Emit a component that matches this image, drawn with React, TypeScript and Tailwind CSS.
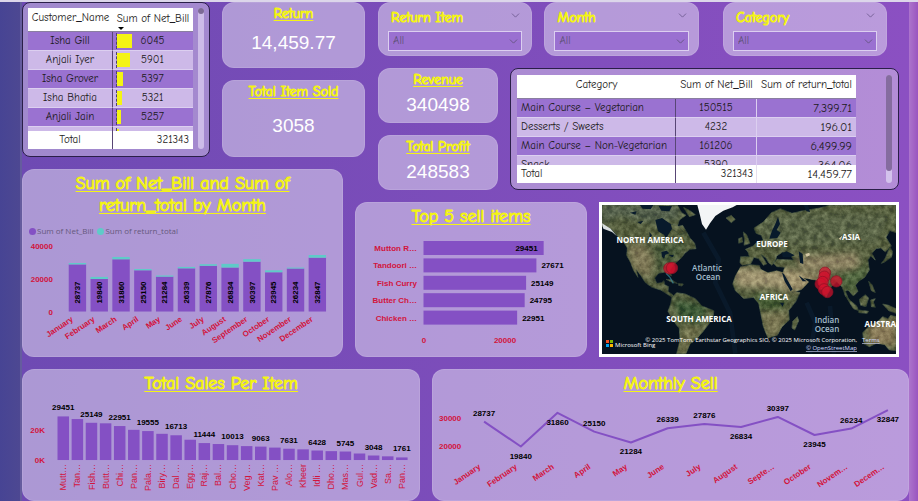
import React from "react";
import { ChevronDown } from "lucide-react";

const comic = "font-['Comic_Sans_MS','Comic_Neue','Open_Sans',sans-serif]";
const heading = "text-[#f4f414] [-webkit-text-stroke:1px_#f4f414] [text-decoration-skip-ink:none]";
const card = "rounded-xl border border-white/10 bg-[#eae6f6]/50";

const MONTHS = ["January", "February", "March", "April", "May", "June", "July", "August", "September", "October", "November", "December"];
const NET_BILL = [28737, 19840, 31860, 25150, 21284, 26339, 27876, 26834, 30397, 23945, 26234, 32847];
const RETURNS = [700, 1300, 1500, 600, 500, 700, 900, 2700, 1700, 1200, 300, 1800];

const ITEMS: [string, number][] = [
  ["Mutt…", 29451], ["Tan…", 27671], ["Fish…", 25149], ["Butt…", 24795], ["Chi…", 22951],
  ["Pan…", 20400], ["Pala…", 19555], ["Biry…", 17700], ["Dal …", 16713], ["Egg…", 13700],
  ["Raj…", 11444], ["Bal…", 10800], ["Cho…", 10013], ["Veg …", 9400], ["Kat…", 9063],
  ["Pav …", 8400], ["Alo…", 7631], ["Kheer", 7200], ["Idli …", 6428], ["Dho…", 6000],
  ["Mas…", 5745], ["Gul…", 4400], ["Vad…", 3048], ["Sa…", 2500], ["Pan…", 1761],
];

const TOP_ITEMS: [string, number][] = [
  ["Mutton R…", 29451], ["Tandoori …", 27671], ["Fish Curry", 25149], ["Butter Ch…", 24795], ["Chicken …", 22951],
];

const CUSTOMERS: [string, number, string][] = [
  ["Isha Gill", 6045, "w-[15px]"],
  ["Anjali Iyer", 5901, "w-[13px]"],
  ["Isha Grover", 5397, "w-[6px]"],
  ["Isha Bhatia", 5321, "w-[5px]"],
  ["Anjali Jain", 5257, "w-[4px]"],
  ["Neha Pandey", 5188, "w-[2px]"],
];

const CATEGORIES = [
  ["Main Course – Vegetarian", "150515", "7,399.71"],
  ["Desserts / Sweets", "4232", "196.01"],
  ["Main Course – Non-Vegetarian", "161206", "6,499.99"],
  ["Snack", "5390", "364.06"],
];

function ChartTitle({ children }: { children: React.ReactNode }) {
  return (
    <h2 className={`${comic} ${heading} px-10 pt-[3px] pb-px text-center text-[18px] leading-[22px] underline decoration-1 underline-offset-2`}>
      {children}
    </h2>
  );
}

function Kpi({ title, value, className }: { title: string; value: string; className: string }) {
  return (
    <section className={`${card} ${className} flex flex-col items-center`}>
      <h2 className={`${comic} ${heading} text-[14px] leading-4 underline decoration-1 underline-offset-2`}>{title}</h2>
      <p className="flex flex-1 items-center font-['Liberation_Sans',Arial,sans-serif] text-[19px] leading-5 text-white">{value}</p>
    </section>
  );
}

function Slicer({ label, id, className }: { label: string; id: string; className: string }) {
  return (
    <section className={`${card} ${className} h-[54px] min-w-0 px-[9px]`}>
      <div className="flex h-7 items-center justify-between pt-px pl-[3px]">
        <label htmlFor={id} className={`${comic} ${heading} text-[14px] leading-4`}>{label}</label>
        <button type="button" aria-label={`Clear ${label}`} className="pb-1 text-[#69558b]">
          <ChevronDown size={13} strokeWidth={1.5} />
        </button>
      </div>
      <div className="relative">
        <select id={id} className={`${comic} block h-5 w-full appearance-none border border-[#dccff0] bg-[#9a70d1] pl-1 text-[11px] leading-4 text-[#5f5078]`}>
          <option>All</option>
        </select>
        <ChevronDown size={13} strokeWidth={1.5} className="pointer-events-none absolute top-1 right-[2px] text-[#5f5078]" />
      </div>
    </section>
  );
}

const chartText = "font-['Liberation_Sans',Arial,sans-serif] text-[8px]";

function MonthlyStack() {
  return (
    <svg viewBox="0 0 321 118" className="block w-full" role="img" aria-label="Net bill and return total by month">
      {[40000, 20000, 0].map((v) => (
        <text key={v} x="30" y={78 - v * 0.00165} textAnchor="end" className={`${chartText} font-bold`} fill="#d2143c">{v}</text>
      ))}
      {NET_BILL.map((v, i) => {
        const x = 46 + i * 21.95;
        const h = v * 0.00165;
        const r = RETURNS[i] * 0.00115 + 0.6;
        return (
          <g key={MONTHS[i]}>
            <rect x={x} y={75 - h} width="17.5" height={h} fill="#8450c4" />
            <rect x={x} y={75 - h - r} width="17.5" height={r} fill="#5fcbc8" />
            <text transform={`translate(${x + 11.5} 67) rotate(-90)`} className={`${chartText} font-bold`} fill="#000">{v}</text>
            <text transform={`translate(${x + 5} 84) rotate(-34)`} textAnchor="end" className={`${chartText} font-bold`} fill="#d2143c">{MONTHS[i]}</text>
          </g>
        );
      })}
    </svg>
  );
}

function TopItems() {
  return (
    <svg viewBox="0 0 230 123" className="block w-full" role="img" aria-label="Top 5 sell items">
      {TOP_ITEMS.map(([name, v], i) => {
        const y = 8 + i * 17.4;
        const w = v * 0.00408;
        return (
          <g key={name}>
            <rect x="67.5" y={y} width={w} height="14" fill="#8450c4" />
            <text x="61" y={y + 10} textAnchor="end" className={`${chartText} font-bold`} fill="#d2143c">{name}</text>
            <text x={i === 0 ? 67.5 + w - 6 : 67.5 + w + 5} y={y + 10} textAnchor={i === 0 ? "end" : "start"} className={`${chartText} font-bold`} fill="#000">{v}</text>
          </g>
        );
      })}
      <text x="68" y="110" textAnchor="middle" className={`${chartText} font-bold`} fill="#d2143c">0</text>
      <text x="149" y="110" textAnchor="middle" className={`${chartText} font-bold`} fill="#d2143c">20000</text>
    </svg>
  );
}

function SalesPerItem() {
  return (
    <svg viewBox="0 0 396 101" className="block w-full" role="img" aria-label="Total sales per item">
      <text x="22" y="34" textAnchor="end" className={`${chartText} font-bold`} fill="#d2143c">20K</text>
      <text x="22" y="64" textAnchor="end" className={`${chartText} font-bold`} fill="#d2143c">0K</text>
      {ITEMS.map(([name, v], i) => {
        const x = 34.5 + i * 14.1;
        const h = v * 0.00148;
        return (
          <g key={i}>
            <rect x={x} y={61 - h} width="11.5" height={h} fill="#8450c4" />
            {i % 2 === 0 && (
              <text x={x + 5.7} y={55 - h} textAnchor="middle" className={`${chartText} font-bold`} fill="#000">{v}</text>
            )}
            <text transform={`translate(${x + 8.8} 65) rotate(-90)`} textAnchor="end" className="font-['Liberation_Sans',Arial,sans-serif] text-[9px]" fill="#d2143c">{name}</text>
          </g>
        );
      })}
    </svg>
  );
}

function MonthlyLine() {
  const px = (i: number) => 51 + i * 36.65;
  const py = (v: number) => 47 - (v - 20000) * 0.0028;
  const below = [1, 2, 4, 7, 9, 11];
  const short = MONTHS.map((m, i) => (i === 8 || i > 9 ? m.slice(0, 5) + "…" : m));
  return (
    <svg viewBox="0 0 474 101" className="block w-full" role="img" aria-label="Monthly sell">
      <text x="6" y="22" className={`${chartText} font-bold`} fill="#d2143c">30000</text>
      <text x="6" y="50" className={`${chartText} font-bold`} fill="#d2143c">20000</text>
      <polyline points={NET_BILL.map((v, i) => `${px(i)},${py(v)}`).join(" ")} fill="none" stroke="#8450c4" strokeWidth="2" strokeLinejoin="round" />
      {NET_BILL.map((v, i) => (
        <g key={i}>
          <text x={px(i)} y={py(v) + (below.includes(i) ? 12 : -6)} textAnchor="middle" className={`${chartText} font-bold`} fill="#000">{v}</text>
          <text transform={`translate(${px(i) - 3} 69) rotate(-34)`} textAnchor="end" className={`${chartText} font-bold`} fill="#d2143c">{short[i]}</text>
        </g>
      ))}
    </svg>
  );
}

const LAND = [
  // North and Central America
  "M36 27H262L275 50L288 58L268 72L262 92L278 88L290 108L300 126L314 142L318 158L300 160L284 172L276 184L262 196L250 208L240 222L244 240L236 236L226 228L206 232L194 246L200 262L214 260L222 254L224 266L236 272L234 286L250 298L246 304L228 292L212 282L186 274L166 260L152 238L138 220L144 244L130 222L122 200L110 178L112 156L102 140L84 122L66 102L36 92Z",
  // South America
  "M246 304L260 290L286 294L316 308L336 330L372 344L368 368L352 390L338 408L322 426L300 444L288 473H260L270 432L268 398L250 374L234 346L242 324Z",
  // Africa
  "M452 212L482 206L508 208L512 220L534 230L560 224L580 230L590 254L604 284L630 290L618 316L596 344L598 372L576 392L562 418L534 426L520 392L512 352L506 322L490 304L462 308L436 284L428 264L436 240Z",
  // Madagascar
  "M622 362L626 374L614 402L606 396L608 376Z",
  // Eurasia with Arabia, India and Indochina
  "M452 182L478 182L474 168L466 160L490 150L502 138L520 132L514 118L498 112L492 96L520 78L544 50L572 38L606 52L640 44L690 36L720 27H918V110L900 104L888 124L904 150L886 168L872 156L858 158L846 172L856 192L842 180L834 192L838 222L824 244L806 256L796 268L804 286L790 300L774 282L766 286L778 314L766 300L756 272L740 258L724 272L708 304L694 278L684 254L656 248L640 246L656 258L636 280L606 290L592 262L578 232L584 214L560 212L548 200L562 190L610 192L602 178L578 168L560 180L556 196L546 208L536 200L528 186L514 176L530 204L520 208L506 188L492 184L482 204L456 208L450 200Z",
  // Britain and Ireland
  "M460 108L470 116L480 142L462 148L464 132ZM446 128L456 124L458 138L446 142Z",
  // Iceland
  "M408 66L424 58L436 70L424 80Z",
  // Australia
  "M918 362L902 358L894 368L878 362L864 376L838 390L818 410L822 444L838 452L860 442L884 446L898 462L918 464Z",
  // Indonesian islands, New Guinea and the Philippines
  "M768 302L800 330L806 344L790 338ZM806 342L836 346L832 352L806 350ZM808 310L826 296L836 306L828 332L812 328ZM842 312L856 308L850 318L856 334L844 332ZM878 324L896 328L918 338V352L896 344ZM836 256L846 266L856 290L844 284Z",
  // Japan
  "M900 152L908 168L904 184L884 198L874 202L886 186Z",
  // Cuba and Hispaniola
  "M228 250L246 252L262 262L248 260ZM266 262L280 264L276 270L266 268Z",
  // Canadian Arctic islands
  "M280 34L300 44L316 56L298 62ZM236 84L262 88L284 112L270 116L246 98Z",
];

const PINS = [[238, 217], [246, 216], [705, 230], [703, 242], [692, 264], [698, 258], [702, 280], [712, 288], [739, 256]];

function WorldMap() {
  const label = "font-['Open_Sans',sans-serif] text-[8px] font-bold";
  return (
    <svg viewBox="0 0 294 149" preserveAspectRatio="xMidYMid slice" className="block h-full w-full" role="img" aria-label="Customer locations">
      <defs>
        <filter id="terrain" x="0" y="0" width="1" height="1" colorInterpolationFilters="sRGB">
          <feTurbulence type="fractalNoise" baseFrequency="0.06" numOctaves="4" seed="7" result="n" />
          <feColorMatrix in="n" type="matrix" values="1.3 0 0 0 -0.35  1.3 0 0 0 -0.33  1.1 0 0 0 -0.35  0 0 0 0 0.3" result="t" />
          <feComposite in="t" in2="SourceGraphic" operator="in" result="c" />
          <feMerge><feMergeNode in="SourceGraphic" /><feMergeNode in="c" /></feMerge>
        </filter>
        <filter id="soft"><feGaussianBlur stdDeviation="9" /></filter>
        <clipPath id="coast">{LAND.map((d, i) => <path key={i} d={d} />)}</clipPath>
      </defs>
      <rect width="294" height="149" fill="#06121f" />
      <g transform="scale(0.33333) translate(-36 -27)">
        <g fill="none" stroke="#0e2438" strokeWidth="14" opacity=".45">
          <path d="M340 110L386 190L376 260L420 350L436 473" />
          <path d="M650 320L676 380L660 473M720 330L732 473" />
        </g>
        <g filter="url(#terrain)">
          {LAND.map((d, i) => <path key={i} d={d} fill="#5a6444" stroke="#33483f" strokeWidth="2" />)}
          <g clipPath="url(#coast)">
            <g filter="url(#soft)">
              <path d="M36 27H270V70L180 80L90 60L36 80Z" fill="#566656" />
              <path d="M110 150L160 140L190 190L180 250L130 220Z" fill="#938865" />
              <path d="M190 130L300 130L240 220L200 220Z" fill="#4b6040" />
              <path d="M426 212L590 224L610 290L560 276L440 272Z" fill="#bdac86" />
              <path d="M580 214L700 240L630 290L590 270Z" fill="#bda982" />
              <path d="M620 180L800 170L810 215L700 230L630 220Z" fill="#a59575" />
              <path d="M490 290L590 296L580 340L510 345Z" fill="#476438" />
              <path d="M510 350L600 350L560 425L530 420Z" fill="#8b845f" />
              <path d="M250 310L350 330L330 390L270 370Z" fill="#345b38" />
              <path d="M280 390L340 390L290 473H264Z" fill="#7d7b55" />
              <path d="M500 60L700 50L900 60L860 140L520 150Z" fill="#5e6c50" />
              <path d="M740 240L830 200L830 250L780 300Z" fill="#4f6b42" />
              <path d="M830 390L918 370V450L840 446Z" fill="#a38c68" />
            </g>
          </g>
        </g>
        <path d="M322 27H440L428 34L400 44L376 60L360 82L348 101L336 84L330 58Z" fill="#f3f5f6" />
        <path d="M36 82L62 98L80 120L66 108L40 98Z" fill="#d8dedf" />
        <g fill="#081a2b">
          <path d="M196 72L216 66L242 84L246 98L236 114L228 128L222 116L204 106Z" />
          <path d="M214 168L230 164L238 172L226 176L222 188L216 182ZM236 178L252 176L248 184Z" />
          <path d="M120 50L140 46L136 56ZM142 78L160 74L152 84ZM178 108L186 118L180 126ZM150 27L190 27L182 40L158 38ZM206 30L246 30L238 46L214 44Z" />
          <path d="M538 128L546 104L556 84L564 62L570 84L560 102L572 110L562 126Z" />
          <path d="M576 172L590 166L614 178L600 184L578 184ZM626 166L638 174L640 204L630 200Z" />
          <path d="M576 230L582 234L608 280L602 286L584 256ZM626 238L650 256L638 256Z" />
          <path d="M570 320L582 320L578 332ZM640 27L650 46L660 48L654 27Z" />
        </g>
        <path d="M646 174L658 170L660 178L650 182ZM746 128L758 118L752 132Z" fill="#d6c9a5" />
        <path d="M228 232L240 244L250 262" fill="none" stroke="#3889a0" strokeWidth="4" opacity=".7" />
        {PINS.map(([x, y], i) => (
          <circle key={i} cx={x} cy={y} r="17" fill="#d3102c" fillOpacity=".72" stroke="#8c1024" strokeWidth="2" />
        ))}
      </g>
      <g textAnchor="middle" className={label} fill="#fff">
        <text x="48" y="38">NORTH AMERICA</text>
        <text x="170" y="42">EUROPE</text>
        <text x="249" y="35">ASIA</text>
        <text x="172" y="95">AFRICA</text>
        <text x="97" y="117">SOUTH AMERICA</text>
        <text x="294" y="122" textAnchor="end">AUSTRA</text>
      </g>
      <g textAnchor="middle" className="font-['Open_Sans',sans-serif] text-[8px] font-semibold" fill="#a3bccc">
        <text x="105" y="66">Atlantic</text>
        <text x="106" y="75">Ocean</text>
        <text x="225" y="118">Indian</text>
        <text x="225" y="127">Ocean</text>
      </g>
      <rect x="4" y="135" width="3" height="3" fill="#f25022" />
      <rect x="8" y="135" width="3" height="3" fill="#7fba00" />
      <rect x="4" y="139" width="3" height="3" fill="#00a4ef" />
      <rect x="8" y="139" width="3" height="3" fill="#ffb900" />
      <g className="font-['Open_Sans',sans-serif] text-[6px]" fill="#fff">
        <text x="13" y="142">Microsoft Bing</text>
        <text x="255" y="137" textAnchor="end">© 2025 TomTom, Earthstar Geographics SIO, © 2025 Microsoft Corporation,</text>
        <a href="#terms"><text x="260" y="137" textDecoration="underline" fill="#d5dcff">Terms</text></a>
        <a href="#osm"><text x="255" y="145" textAnchor="end" textDecoration="underline" fill="#d5dcff">© OpenStreetMap</text></a>
      </g>
    </svg>
  );
}

function CustomerTable() {
  return (
    <section className="col-start-1 col-end-2 row-start-1 row-end-2 flex justify-between rounded-lg border border-[#2a1f48] bg-white/35 p-[5px]">
      <div className="h-[141px] w-[165px] overflow-hidden">
        <table className={`${comic} w-full table-fixed border-separate border-spacing-0 text-[11px] leading-4 text-[#1c1a20]`}>
          <colgroup><col className="w-[85px]" /><col className="w-[80px]" /></colgroup>
          <thead className="sticky top-0 z-10 bg-white">
            <tr>
              <th scope="col" className="h-6 border-b border-[#8a7fa0] p-0 pb-1 font-normal">Customer_Name</th>
              <th scope="col" className="h-6 border-b border-[#8a7fa0] p-0 font-normal">
                <span className="block leading-[17px] whitespace-nowrap">Sum of Net_Bill</span>
                <span className="ml-[5px] block h-0 w-0 border-x-[3px] border-t-[3px] border-x-transparent border-t-black" />
              </th>
            </tr>
          </thead>
          <tbody>
            {CUSTOMERS.map(([name, total, bar], i) => (
              <tr key={name} className={i % 2 ? "bg-[#cdb9e8]" : "bg-[#9a72d1]"}>
                <td className="h-[19px] border-r border-b border-r-[#584675] border-b-[#dccff0] p-0 text-center">{name}</td>
                <td className="h-[19px] border-b border-b-[#dccff0] p-0 pl-[3px]">
                  <div className="flex items-center">
                    <span className="flex w-4 border-l border-dashed border-[#504070] py-px"><span className={`${bar} h-[14px] bg-[#f4f414]`} /></span>
                    <span className="flex-1 pr-[20px] text-center">{total}</span>
                  </div>
                </td>
              </tr>
            ))}
          </tbody>
          <tfoot className="sticky bottom-0 bg-white">
            <tr>
              <td className="h-[18px] border-r border-[#584675] p-0 text-center">Total</td>
              <td className="h-[18px] p-0 pr-1 text-right">321343</td>
            </tr>
          </tfoot>
        </table>
      </div>
      <div className="h-[141px] w-[6px] rounded-full bg-[#cdbce8]"><div className="h-[6px] rounded-full bg-[#7d6a96]" /></div>
    </section>
  );
}

function CategoryTable() {
  return (
    <section className="flex flex-1 justify-between rounded-lg border border-[#2a1f48] bg-white/35 p-[6px]">
      <div className="h-[108px] w-[339px] overflow-hidden">
        <table className={`${comic} w-full table-fixed border-separate border-spacing-0 text-[11px] leading-4 text-[#1c1a20]`}>
          <colgroup><col className="w-[159px]" /><col className="w-[81px]" /><col className="w-[99px]" /></colgroup>
          <thead className="sticky top-0 z-10 bg-white">
            <tr>
              {["Category", "Sum of Net_Bill", "Sum of return_total"].map((h) => (
                <th key={h} scope="col" className="h-6 border-b border-[#8a7fa0] p-0 pb-1 font-normal whitespace-nowrap">{h}</th>
              ))}
            </tr>
          </thead>
          <tbody>
            {CATEGORIES.map(([name, bill, ret], i) => (
              <tr key={name} className={i % 2 ? "bg-[#cdb9e8]" : "bg-[#9a72d1]"}>
                <td className="h-[19px] border-r border-b border-r-[#584675] border-b-[#dccff0] p-0 pl-1 whitespace-nowrap">{name}</td>
                <td className="h-[19px] border-r border-b border-[#dccff0] p-0 text-center">{bill}</td>
                <td className="h-[19px] border-b border-[#dccff0] p-0 pr-1 text-right text-[12px]">{ret}</td>
              </tr>
            ))}
          </tbody>
          <tfoot className="sticky bottom-0 bg-white">
            <tr>
              <td className="h-[18px] border-r border-[#584675] p-0 pl-1">Total</td>
              <td className="h-[18px] border-r border-[#e6e0ee] p-0 pr-[3px] text-right">321343</td>
              <td className="h-[18px] p-0 pr-1 text-right text-[12px]">14,459.77</td>
            </tr>
          </tfoot>
        </table>
      </div>
      <div className="h-[108px] w-[6px] rounded-full bg-[#d3c2ec]"><div className="h-24 rounded-full bg-[#856c9f]" /></div>
    </section>
  );
}

export default function App() {
  return (
    <div className="flex overflow-hidden border-t-2 border-[#dcd6ea] bg-[#4a4691]">
      <div className="w-[22px] shrink-0 border-r-2 border-[#655c9e] bg-linear-to-r from-[#474494] to-[#4d4892]" />
      <main className="grid min-w-0 flex-1 grid-cols-[188fr_12fr_121fr_12fr_10fr_13fr_121fr_11fr_77fr_12fr_300fr_10fr] grid-rows-[155px_12px_21px_12px_155px_12px_132px] bg-linear-to-r from-[#6e4ab3] to-[#8b50c2]">
        <CustomerTable />
        <div className="col-start-3 col-end-6 row-start-1 row-end-2 flex flex-col gap-3">
          <Kpi title="Return" value="14,459.77" className="h-[66px] pt-[3px] pb-1" />
          <Kpi title="Total Item Sold" value="3058" className="flex-1 pt-[3px] pb-1" />
        </div>
        <div className="col-start-7 col-end-12 row-start-1 row-end-4 flex flex-col gap-3">
          <div className="flex pr-3">
            <Slicer id="return-item" label="Return Item" className="flex-[154]" />
            <Slicer id="month" label="Month" className="ml-3 flex-[154]" />
            <Slicer id="category" label="Category" className="ml-6 flex-[165]" />
          </div>
          <div className="flex flex-1 gap-3">
            <div className="flex w-[120px] flex-col gap-3">
              <Kpi title="Revenue" value="340498" className="flex-1 pt-[3px] pb-px" />
              <Kpi title="Total Profit" value="248583" className="flex-1 pt-[3px] pb-px" />
            </div>
            <CategoryTable />
          </div>
        </div>
        <section className={`${card} col-start-1 col-end-4 row-start-3 row-end-6`}>
          <ChartTitle>Sum of Net_Bill and Sum of return_total by Month</ChartTitle>
          <div className="flex gap-1 pt-[7px] pl-[6px] font-['Open_Sans',sans-serif] text-[8px] leading-3 text-[#66597c]">
            <span className="flex items-center gap-px"><i className="h-[7px] w-[7px] rounded-full bg-[#8450c4]" />Sum of Net_Bill</span>
            <span className="flex items-center gap-px"><i className="h-[7px] w-[7px] rounded-full bg-[#5fcbc8]" />Sum of return_total</span>
          </div>
          <MonthlyStack />
        </section>
        <section className={`${card} col-start-5 col-end-10 row-start-5 row-end-6`}>
          <ChartTitle>Top 5 sell items</ChartTitle>
          <div className="pt-1"><TopItems /></div>
        </section>
        <section className="col-start-11 col-end-12 row-start-5 row-end-6 min-h-0 overflow-hidden border-[3px] border-white">
          <WorldMap />
        </section>
        <div className="col-start-1 col-end-13 row-start-7 row-end-8 flex gap-3">
          <section className={`${card} min-w-0 flex-[398]`}>
            <ChartTitle>Total Sales Per Item</ChartTitle>
            <div className="pt-[3px]"><SalesPerItem /></div>
          </section>
          <section className={`${card} min-w-0 flex-[477]`}>
            <ChartTitle>Monthly Sell</ChartTitle>
            <div className="pt-[3px]"><MonthlyLine /></div>
          </section>
        </div>
      </main>
      <div className="w-[9px] shrink-0 bg-linear-to-r from-[#ac74cc] to-[#9a55bf]" />
    </div>
  );
}
